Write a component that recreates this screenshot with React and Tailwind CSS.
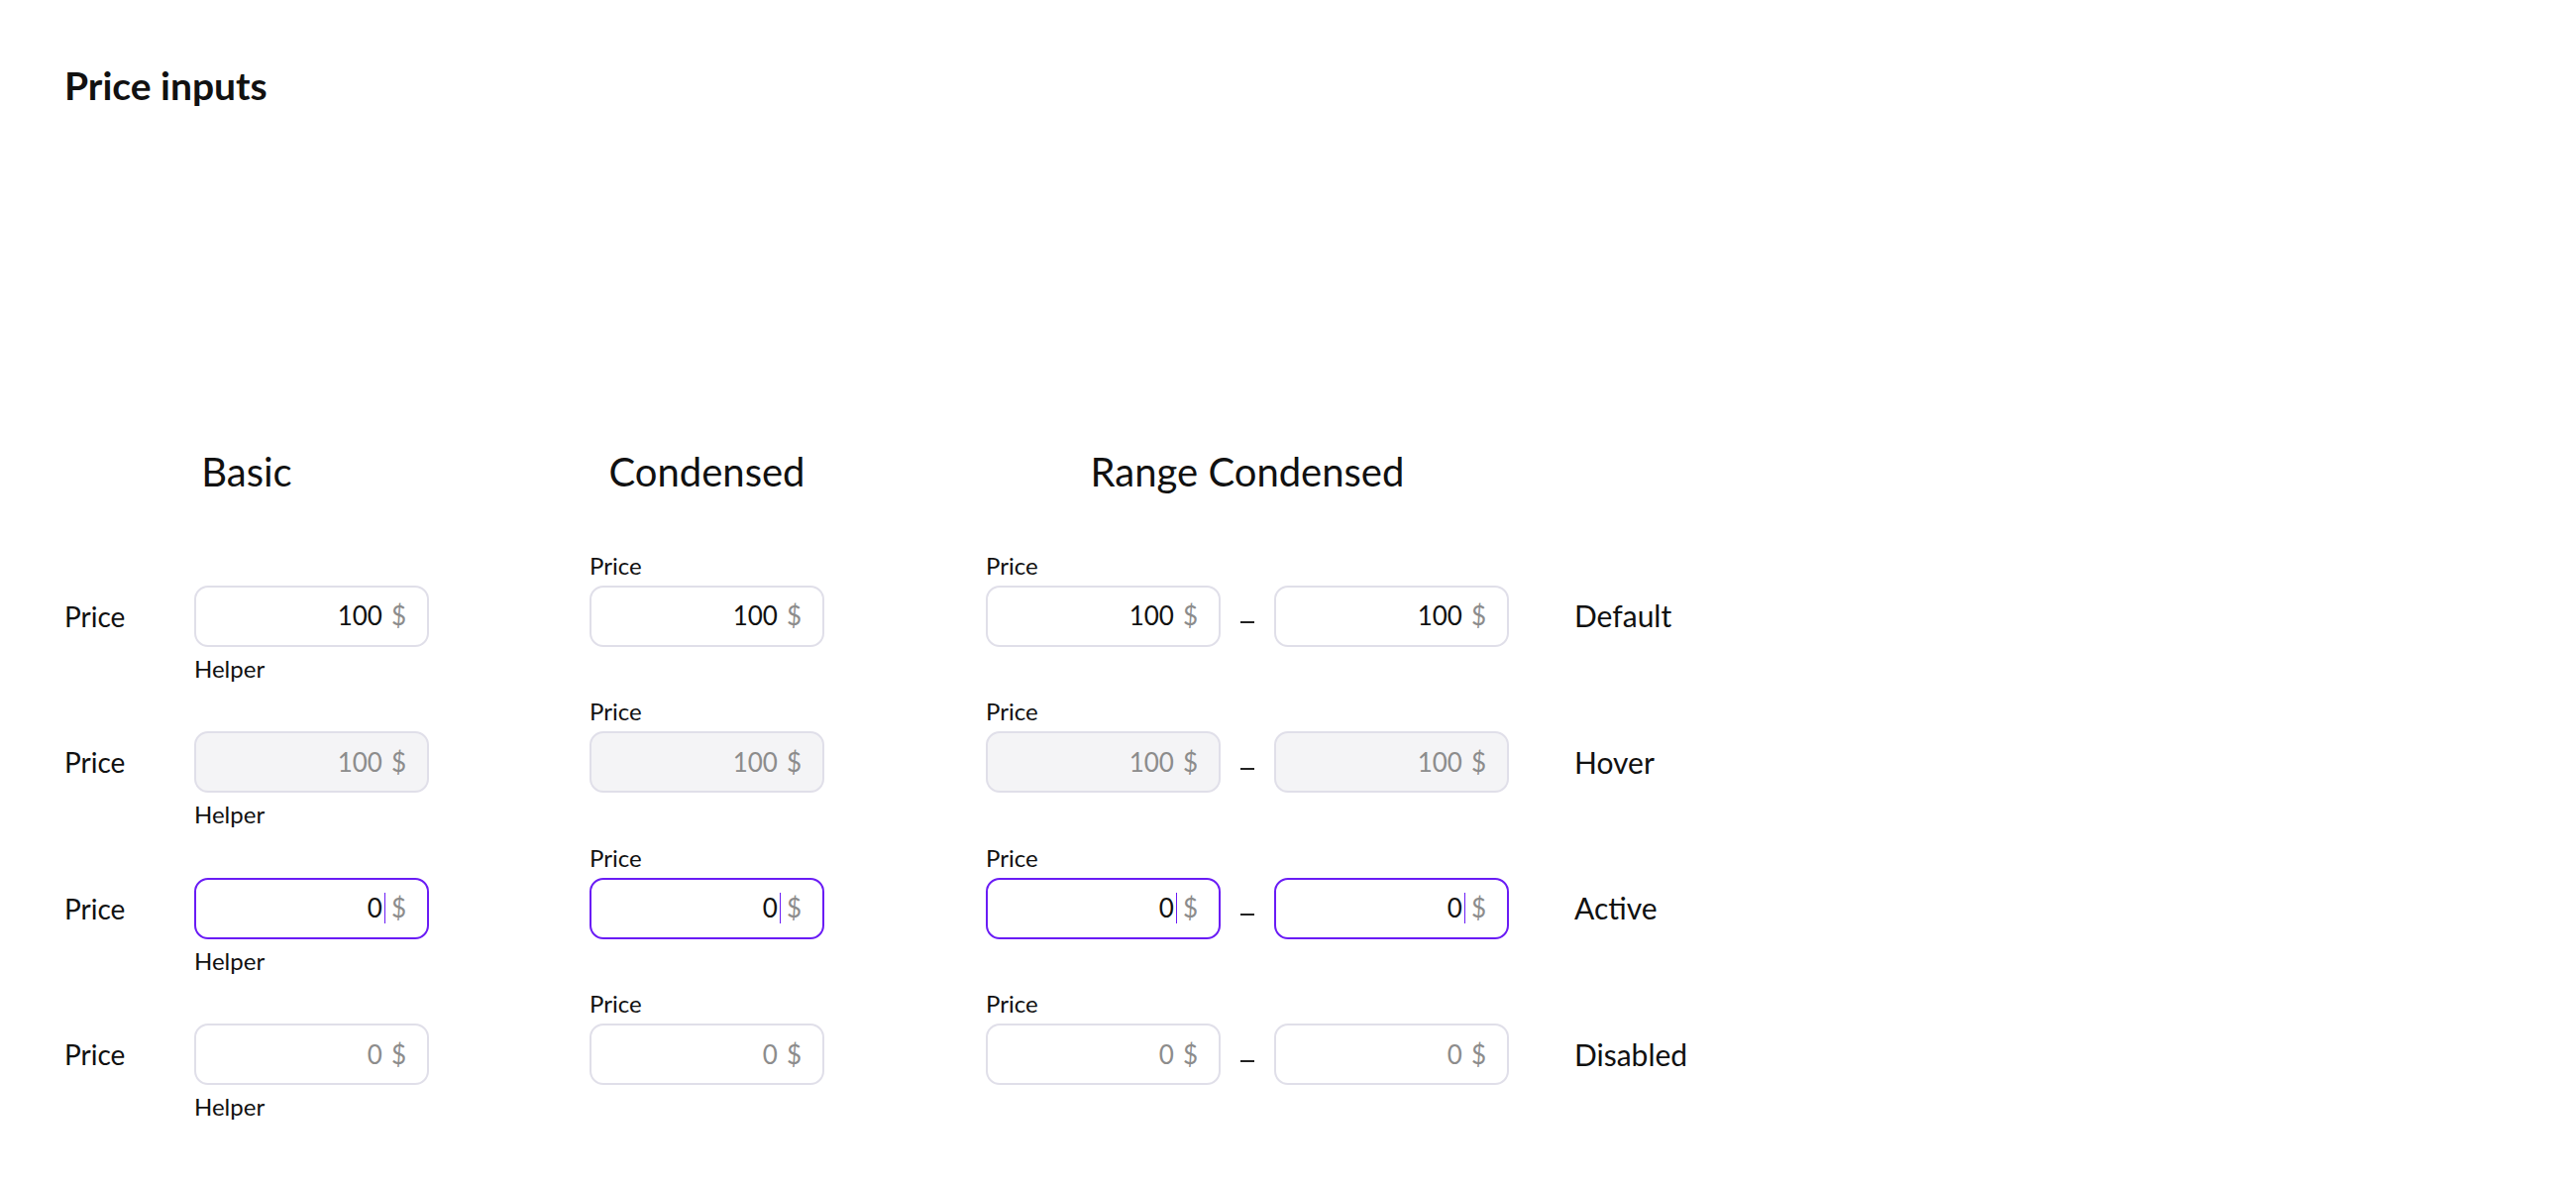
import React from 'react';

const states = [
  { name: 'Default', value: '100', kind: 'default' },
  { name: 'Hover', value: '100', kind: 'hover' },
  { name: 'Active', value: '0', kind: 'active' },
  { name: 'Disabled', value: '0', kind: 'disabled' },
];

const boxStyles = {
  default: 'border-[#e0dfe9] bg-white text-[#111111]',
  hover: 'border-[#e0dfe9] bg-[#f4f4f6] text-[#8c8c8c]',
  active: 'border-[#6a1cf5] bg-white text-[#111111]',
  disabled: 'border-[#e0dfe9] bg-white text-[#8c8c8c]',
};

// single price box, value aligned right with the currency sign
const PriceBox = ({ kind, value }) => (
  <div
    className={`flex h-[62px] w-[237px] items-center justify-end rounded-[14px] border-2 pr-[21px] text-[26px] ${boxStyles[kind]}`}
  >
    <span>{value}</span>
    {kind === 'active' ? (
      <>
        <span className="ml-[2px] h-[31px] w-px bg-[#6a1cf5]" />
        <span className="ml-[6px] text-[#8c8c8c]">$</span>
      </>
    ) : (
      <span className="ml-[9px] text-[#8c8c8c]">$</span>
    )}
  </div>
);

// row skeleton: label above, control, helper below
const Slot = ({ top, helper, helperClass = '', children }) => (
  <div className="flex flex-col">
    <div className="h-[26px] text-[24px] leading-[26px] text-[#111111]">{top}</div>
    <div className="mt-[7px] flex h-[62px] items-center">{children}</div>
    <div className={`mt-[9px] h-[26px] text-[24px] leading-[26px] text-[#111111] ${helperClass}`}>{helper}</div>
  </div>
);

const Group = ({ title, children, className = '' }) => (
  <div className={`flex flex-col ${className}`}>
    <h2 className="h-[40px] text-center text-[40px] leading-none font-normal whitespace-nowrap text-[#111111]">{title}</h2>
    <div className="mt-[61.5px] flex flex-col gap-[17.5px]">{children}</div>
  </div>
);

const App = () => {
  return (
    <div
      className="min-h-screen bg-white pt-[67px] pl-[65px] text-[#111111]"
      style={{ fontFamily: 'Lato, "Noto Sans", sans-serif' }}
    >
      <h1 className="text-[39px] leading-none font-bold">Price inputs</h1>

      <div className="mt-[350px] flex items-start">
        {/* Basic */}
        <Group title="Basic" className="w-[368px]">
          {states.map((s) => (
            <Slot key={s.name} helper="Helper" helperClass="pl-[131px]">
              <span className="w-[131px] text-[28px]">Price</span>
              <PriceBox kind={s.kind} value={s.value} />
            </Slot>
          ))}
        </Group>

        {/* Condensed */}
        <Group title="Condensed" className="ml-[162px] w-[237px]">
          {states.map((s) => (
            <Slot key={s.name} top="Price">
              <PriceBox kind={s.kind} value={s.value} />
            </Slot>
          ))}
        </Group>

        {/* Range Condensed */}
        <Group title="Range Condensed" className="ml-[163px] w-[528px]">
          {states.map((s) => (
            <Slot key={s.name} top="Price">
              <PriceBox kind={s.kind} value={s.value} />
              <div className="flex w-[54px] justify-center">
                <div className="mt-[13px] h-[2px] w-[14px] bg-[#222222]" />
              </div>
              <PriceBox kind={s.kind} value={s.value} />
            </Slot>
          ))}
        </Group>

        {/* State names */}
        <Group title="" className="ml-[66px]">
          {states.map((s) => (
            <Slot key={s.name}>
              <span className="text-[30px]">{s.name}</span>
            </Slot>
          ))}
        </Group>
      </div>
    </div>
  );
};

export default App;
